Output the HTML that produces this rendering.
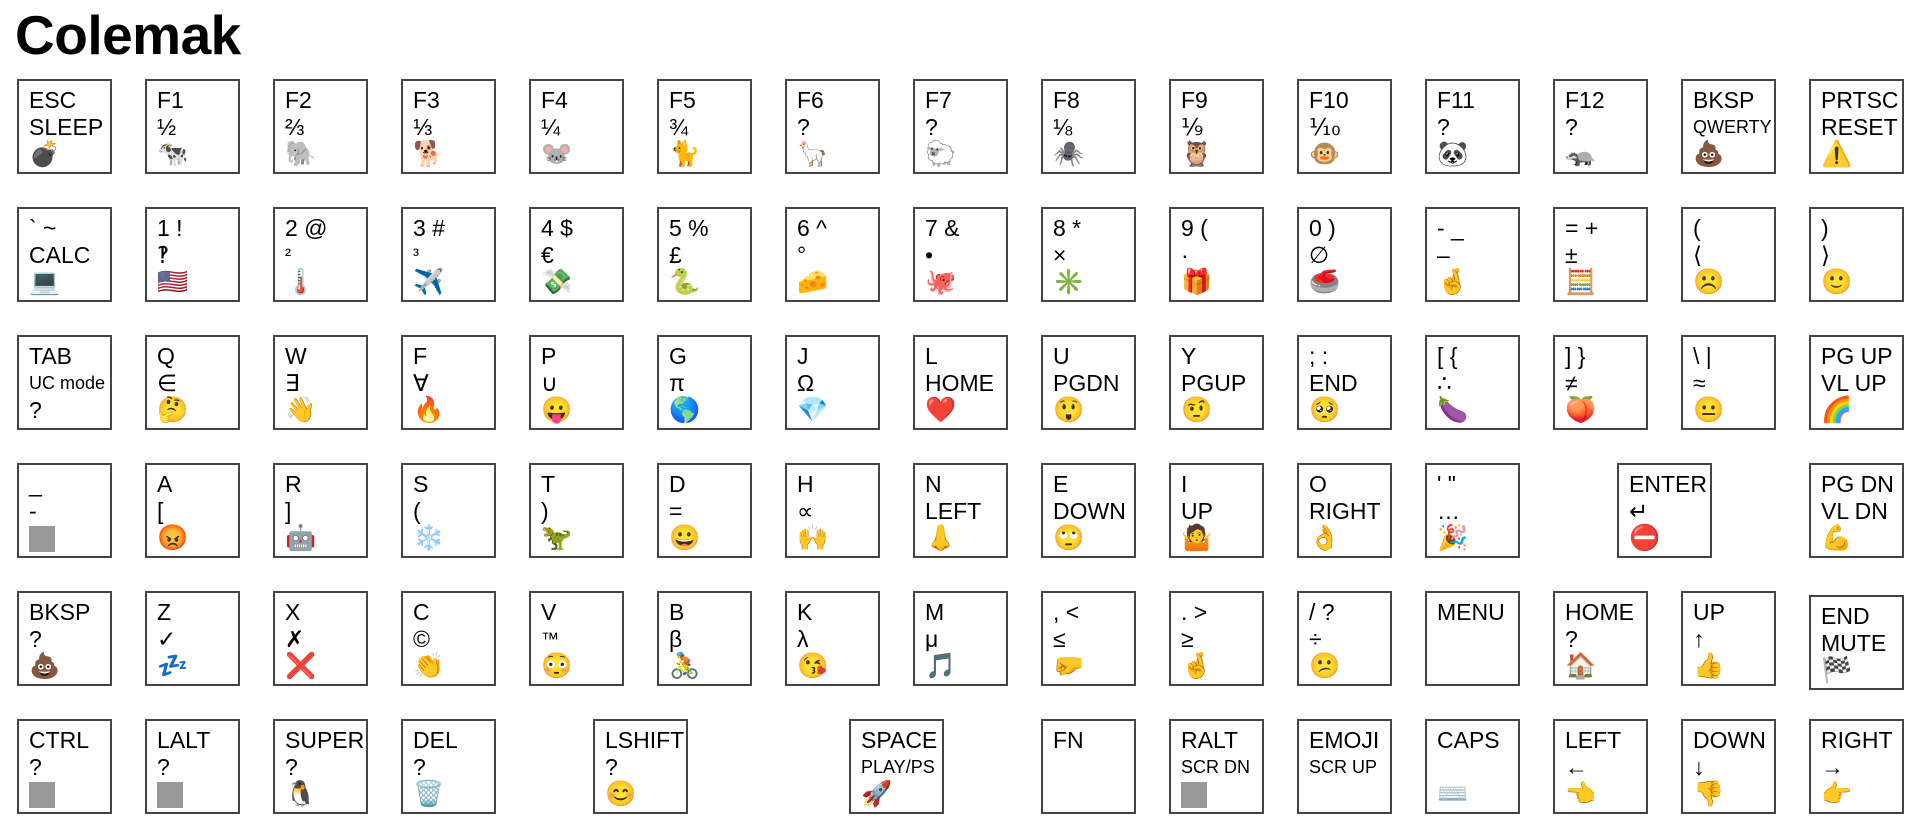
<!DOCTYPE html>
<html><head><meta charset="utf-8"><style>
body{margin:0;width:1920px;height:830px;background:#fff;position:relative;overflow:hidden;font-family:"Liberation Sans","DejaVu Sans",sans-serif;color:#000}
h1{position:absolute;left:15px;top:2px;margin:0;font-size:55px;font-weight:700;line-height:66px;font-family:"Liberation Sans",sans-serif;letter-spacing:-0.5px}
.k{position:absolute;width:95px;height:95px;box-sizing:border-box;border:2px solid #444;padding:6px 0 0 10px;font-size:23px;line-height:27px;white-space:nowrap;overflow:hidden}
.k div{height:27px}
.s{font-size:18px}
.e{font-size:25px;font-family:"Noto Color Emoji","DejaVu Sans",sans-serif}
.g{display:inline-block;width:26px;height:26px;background:#999;margin-top:1px}
</style></head><body>
<h1>Colemak</h1>

<!-- row 1 -->
<div class="k" style="left:17px;top:79px"><div>ESC</div><div>SLEEP</div><div class="e">💣</div></div>
<div class="k" style="left:145px;top:79px"><div>F1</div><div>½</div><div class="e">🐄</div></div>
<div class="k" style="left:273px;top:79px"><div>F2</div><div>⅔</div><div class="e">🐘</div></div>
<div class="k" style="left:401px;top:79px"><div>F3</div><div>⅓</div><div class="e">🐕</div></div>
<div class="k" style="left:529px;top:79px"><div>F4</div><div>¼</div><div class="e">🐭</div></div>
<div class="k" style="left:657px;top:79px"><div>F5</div><div>¾</div><div class="e">🐈</div></div>
<div class="k" style="left:785px;top:79px"><div>F6</div><div>?</div><div class="e">🦙</div></div>
<div class="k" style="left:913px;top:79px"><div>F7</div><div>?</div><div class="e">🐑</div></div>
<div class="k" style="left:1041px;top:79px"><div>F8</div><div>⅛</div><div class="e">🕷</div></div>
<div class="k" style="left:1169px;top:79px"><div>F9</div><div>⅑</div><div class="e">🦉</div></div>
<div class="k" style="left:1297px;top:79px"><div>F10</div><div>⅒</div><div class="e">🐵</div></div>
<div class="k" style="left:1425px;top:79px"><div>F11</div><div>?</div><div class="e">🐼</div></div>
<div class="k" style="left:1553px;top:79px"><div>F12</div><div>?</div><div class="e">🦡</div></div>
<div class="k" style="left:1681px;top:79px"><div>BKSP</div><div class="s">QWERTY</div><div class="e">💩</div></div>
<div class="k" style="left:1809px;top:79px"><div>PRTSC</div><div>RESET</div><div class="e">⚠️</div></div>

<!-- row 2 -->
<div class="k" style="left:17px;top:207px"><div>` ~</div><div>CALC</div><div class="e">💻</div></div>
<div class="k" style="left:145px;top:207px"><div>1 !</div><div>‽</div><div class="e">🇺🇸</div></div>
<div class="k" style="left:273px;top:207px"><div>2 @</div><div class="s">²</div><div class="e">🌡</div></div>
<div class="k" style="left:401px;top:207px"><div>3 #</div><div class="s">³</div><div class="e">✈️</div></div>
<div class="k" style="left:529px;top:207px"><div>4 $</div><div>€</div><div class="e">💸</div></div>
<div class="k" style="left:657px;top:207px"><div>5 %</div><div>£</div><div class="e">🐍</div></div>
<div class="k" style="left:785px;top:207px"><div>6 ^</div><div>°</div><div class="e">🧀</div></div>
<div class="k" style="left:913px;top:207px"><div>7 &amp;</div><div>•</div><div class="e">🐙</div></div>
<div class="k" style="left:1041px;top:207px"><div>8 *</div><div>×</div><div class="e">✳️</div></div>
<div class="k" style="left:1169px;top:207px"><div>9 (</div><div>·</div><div class="e">🎁</div></div>
<div class="k" style="left:1297px;top:207px"><div>0 )</div><div>∅</div><div class="e">🥌</div></div>
<div class="k" style="left:1425px;top:207px"><div>- _</div><div>–</div><div class="e">🤞</div></div>
<div class="k" style="left:1553px;top:207px"><div>= +</div><div>±</div><div class="e">🧮</div></div>
<div class="k" style="left:1681px;top:207px"><div>(</div><div>⟨</div><div class="e">☹️</div></div>
<div class="k" style="left:1809px;top:207px"><div>)</div><div>⟩</div><div class="e">🙂</div></div>

<!-- row 3 -->
<div class="k" style="left:17px;top:335px"><div>TAB</div><div class="s">UC mode</div><div>?</div></div>
<div class="k" style="left:145px;top:335px"><div>Q</div><div>∈</div><div class="e">🤔</div></div>
<div class="k" style="left:273px;top:335px"><div>W</div><div>∃</div><div class="e">👋</div></div>
<div class="k" style="left:401px;top:335px"><div>F</div><div>∀</div><div class="e">🔥</div></div>
<div class="k" style="left:529px;top:335px"><div>P</div><div>∪</div><div class="e">😛</div></div>
<div class="k" style="left:657px;top:335px"><div>G</div><div>π</div><div class="e">🌎</div></div>
<div class="k" style="left:785px;top:335px"><div>J</div><div>Ω</div><div class="e">💎</div></div>
<div class="k" style="left:913px;top:335px"><div>L</div><div>HOME</div><div class="e">❤️</div></div>
<div class="k" style="left:1041px;top:335px"><div>U</div><div>PGDN</div><div class="e">😲</div></div>
<div class="k" style="left:1169px;top:335px"><div>Y</div><div>PGUP</div><div class="e">🤨</div></div>
<div class="k" style="left:1297px;top:335px"><div>; :</div><div>END</div><div class="e">🥺</div></div>
<div class="k" style="left:1425px;top:335px"><div>[ {</div><div>∴</div><div class="e">🍆</div></div>
<div class="k" style="left:1553px;top:335px"><div>] }</div><div>≠</div><div class="e">🍑</div></div>
<div class="k" style="left:1681px;top:335px"><div>\ |</div><div>≈</div><div class="e">😐</div></div>
<div class="k" style="left:1809px;top:335px"><div>PG UP</div><div>VL UP</div><div class="e">🌈</div></div>

<!-- row 4 -->
<div class="k" style="left:17px;top:463px"><div>_</div><div>-</div><div><span class="g"></span></div></div>
<div class="k" style="left:145px;top:463px"><div>A</div><div>[</div><div class="e">😡</div></div>
<div class="k" style="left:273px;top:463px"><div>R</div><div>]</div><div class="e">🤖</div></div>
<div class="k" style="left:401px;top:463px"><div>S</div><div>(</div><div class="e">❄️</div></div>
<div class="k" style="left:529px;top:463px"><div>T</div><div>)</div><div class="e">🦖</div></div>
<div class="k" style="left:657px;top:463px"><div>D</div><div>=</div><div class="e">😀</div></div>
<div class="k" style="left:785px;top:463px"><div>H</div><div>∝</div><div class="e">🙌</div></div>
<div class="k" style="left:913px;top:463px"><div>N</div><div>LEFT</div><div class="e">👃</div></div>
<div class="k" style="left:1041px;top:463px"><div>E</div><div>DOWN</div><div class="e">🙄</div></div>
<div class="k" style="left:1169px;top:463px"><div>I</div><div>UP</div><div class="e">🤷</div></div>
<div class="k" style="left:1297px;top:463px"><div>O</div><div>RIGHT</div><div class="e">👌</div></div>
<div class="k" style="left:1425px;top:463px"><div>' "</div><div>…</div><div class="e">🎉</div></div>
<div class="k" style="left:1617px;top:463px"><div>ENTER</div><div>↵</div><div class="e">⛔</div></div>
<div class="k" style="left:1809px;top:463px"><div>PG DN</div><div>VL DN</div><div class="e">💪</div></div>

<!-- row 5 -->
<div class="k" style="left:17px;top:591px"><div>BKSP</div><div>?</div><div class="e">💩</div></div>
<div class="k" style="left:145px;top:591px"><div>Z</div><div>✓</div><div class="e">💤</div></div>
<div class="k" style="left:273px;top:591px"><div>X</div><div>✗</div><div class="e">❌</div></div>
<div class="k" style="left:401px;top:591px"><div>C</div><div>©</div><div class="e">👏</div></div>
<div class="k" style="left:529px;top:591px"><div>V</div><div class="s">™</div><div class="e">😳</div></div>
<div class="k" style="left:657px;top:591px"><div>B</div><div>β</div><div class="e">🚴</div></div>
<div class="k" style="left:785px;top:591px"><div>K</div><div>λ</div><div class="e">😘</div></div>
<div class="k" style="left:913px;top:591px"><div>M</div><div>μ</div><div class="e">🎵</div></div>
<div class="k" style="left:1041px;top:591px"><div>, &lt;</div><div>≤</div><div class="e">🤛</div></div>
<div class="k" style="left:1169px;top:591px"><div>. &gt;</div><div>≥</div><div class="e">🤞</div></div>
<div class="k" style="left:1297px;top:591px"><div>/ ?</div><div>÷</div><div class="e">😕</div></div>
<div class="k" style="left:1425px;top:591px"><div>MENU</div></div>
<div class="k" style="left:1553px;top:591px"><div>HOME</div><div>?</div><div class="e">🏠</div></div>
<div class="k" style="left:1681px;top:591px"><div>UP</div><div>↑</div><div class="e">👍</div></div>
<div class="k" style="left:1809px;top:595px"><div>END</div><div>MUTE</div><div class="e">🏁</div></div>

<!-- row 6 -->
<div class="k" style="left:17px;top:719px"><div>CTRL</div><div>?</div><div><span class="g"></span></div></div>
<div class="k" style="left:145px;top:719px"><div>LALT</div><div>?</div><div><span class="g"></span></div></div>
<div class="k" style="left:273px;top:719px"><div>SUPER</div><div>?</div><div class="e">🐧</div></div>
<div class="k" style="left:401px;top:719px"><div>DEL</div><div>?</div><div class="e">🗑</div></div>
<div class="k" style="left:593px;top:719px"><div>LSHIFT</div><div>?</div><div class="e">😊</div></div>
<div class="k" style="left:849px;top:719px"><div>SPACE</div><div class="s">PLAY/PS</div><div class="e">🚀</div></div>
<div class="k" style="left:1041px;top:719px"><div>FN</div></div>
<div class="k" style="left:1169px;top:719px"><div>RALT</div><div class="s">SCR DN</div><div><span class="g"></span></div></div>
<div class="k" style="left:1297px;top:719px"><div>EMOJI</div><div class="s">SCR UP</div></div>
<div class="k" style="left:1425px;top:719px"><div>CAPS</div><div></div><div class="e">⌨️</div></div>
<div class="k" style="left:1553px;top:719px"><div>LEFT</div><div>←</div><div class="e">👈</div></div>
<div class="k" style="left:1681px;top:719px"><div>DOWN</div><div>↓</div><div class="e">👎</div></div>
<div class="k" style="left:1809px;top:719px"><div>RIGHT</div><div>→</div><div class="e">👉</div></div>
</body></html>
